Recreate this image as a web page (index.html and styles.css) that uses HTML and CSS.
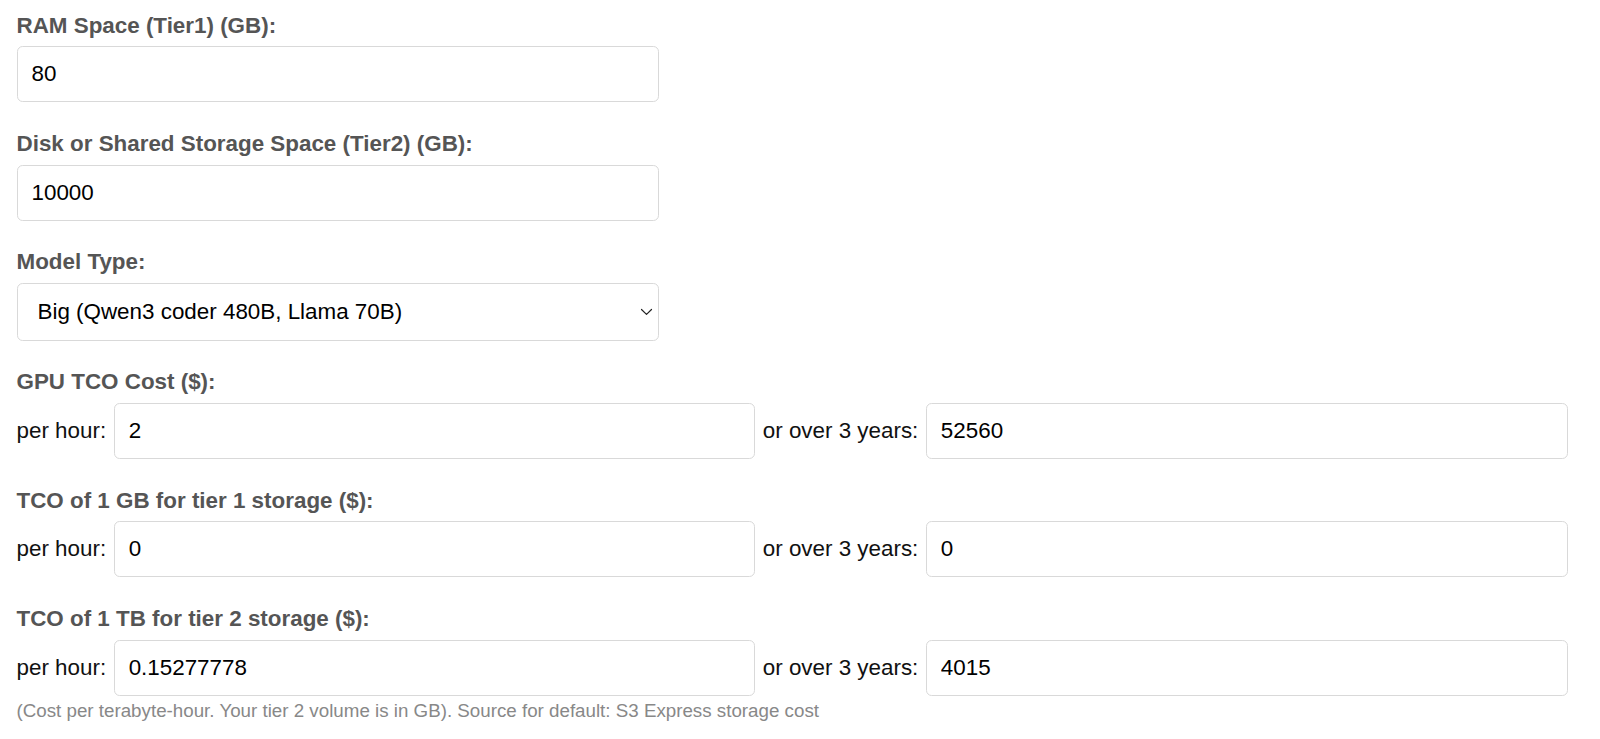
FILE: index.html
```html
<!DOCTYPE html>
<html lang="en">
<head>
<meta charset="utf-8">
<title>TCO Calculator</title>
<link rel="stylesheet" href="styles.css">
</head>
<body>
<form class="form">
  <div class="field">
    <label class="field-label" for="ram">RAM Space (Tier1) (GB):</label>
    <input class="input input-single" id="ram" type="text" value="80">
  </div>
  <div class="field">
    <label class="field-label" for="disk">Disk or Shared Storage Space (Tier2) (GB):</label>
    <input class="input input-single" id="disk" type="text" value="10000">
  </div>
  <div class="field">
    <label class="field-label" for="model">Model Type:</label>
    <div class="select-wrap">
      <select class="input select" id="model">
        <option>Big (Qwen3 coder 480B, Llama 70B)</option>
        <option>Small</option>
      </select>
      <svg class="chevron" width="13" height="8" viewBox="0 0 13 8" aria-hidden="true"><path d="M1.5 1.5 L6.5 6.4 L11.5 1.5" fill="none" stroke="#222" stroke-width="1.2" stroke-linecap="round" stroke-linejoin="round"/></svg>
    </div>
  </div>
  <div class="field">
    <div class="field-label">GPU TCO Cost ($):</div>
    <div class="row">
      <span class="row-label">per hour:</span>
      <input class="input input-flex" type="text" value="2">
      <span class="row-label">or over 3 years:</span>
      <input class="input input-flex" type="text" value="52560">
    </div>
  </div>
  <div class="field">
    <div class="field-label">TCO of 1 GB for tier 1 storage ($):</div>
    <div class="row">
      <span class="row-label">per hour:</span>
      <input class="input input-flex" type="text" value="0">
      <span class="row-label">or over 3 years:</span>
      <input class="input input-flex" type="text" value="0">
    </div>
  </div>
  <div class="field field-last">
    <div class="field-label">TCO of 1 TB for tier 2 storage ($):</div>
    <div class="row">
      <span class="row-label">per hour:</span>
      <input class="input input-flex" type="text" value="0.15277778">
      <span class="row-label">or over 3 years:</span>
      <input class="input input-flex" type="text" value="4015">
    </div>
    <div class="note">(Cost per terabyte-hour. Your tier 2 volume is in GB). Source for default: S3 Express storage cost</div>
  </div>
</form>
</body>
</html>
```

FILE: styles.css
```css
html, body {
  margin: 0;
  padding: 0;
  background: #ffffff;
}

body {
  font-family: "Liberation Sans", Arial, Helvetica, sans-serif;
  color: #000;
}

.form {
  width: 1551px;
  padding: 12.5px 0 0 16.5px;
}

.field {
  margin-bottom: 28.5px;
}

.field-last {
  margin-bottom: 0;
}

.field-label {
  display: block;
  font-size: 22.4px;
  line-height: 26px;
  font-weight: bold;
  color: #555555;
  margin-bottom: 7.75px;
}

.input {
  box-sizing: border-box;
  height: 56px;
  margin: 0;
  border: 1px solid #d9d9d9;
  border-radius: 5.6px;
  padding: 0 14px;
  font-family: "Liberation Sans", Arial, Helvetica, sans-serif;
  font-size: 22.4px;
  color: #000;
  background: #fff;
  outline: none;
}

.input-single {
  display: block;
  width: 642px;
}

.select-wrap {
  position: relative;
  width: 642px;
}

.select {
  display: block;
  width: 642px;
  height: 58px;
  padding: 0 40px 0 20px;
  -webkit-appearance: none;
  appearance: none;
}

.chevron {
  position: absolute;
  right: 6px;
  top: 25px;
}

.row {
  display: flex;
  align-items: center;
  gap: 7.5px;
}

.row-label {
  font-size: 22.4px;
  color: #111;
  white-space: nowrap;
}

.input-flex {
  flex: 1 1 0;
  min-width: 0;
}

.note {
  margin-top: 4.5px;
  font-size: 18.75px;
  line-height: 21px;
  color: #888888;
}
```
